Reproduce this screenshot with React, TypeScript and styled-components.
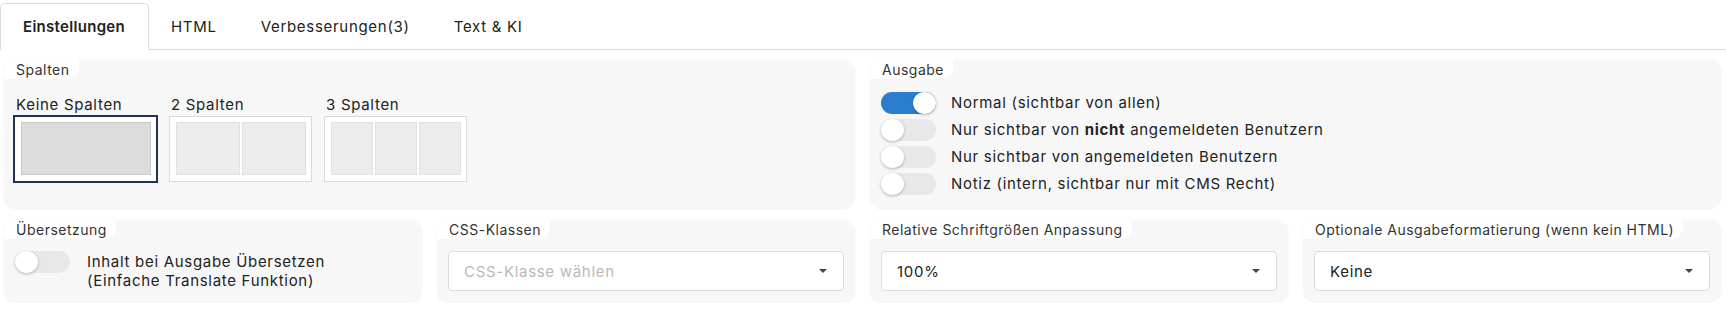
import React from 'react';
import styled, { createGlobalStyle, css } from 'styled-components';

const GlobalStyle = createGlobalStyle`
  * {
    box-sizing: border-box;
  }
  body {
    margin: 0;
    background: #fff;
    color: #222;
    font-family: Inter, 'Open Sans', sans-serif;
    font-size: 15px;
    letter-spacing: 0.7px;
  }
`;

const Page = styled.div`
  width: 1726px;
`;

const TabBar = styled.nav`
  display: flex;
  height: 50px;
  padding-top: 3px;
  border-bottom: 1px solid #d9d9d9;
`;

const Tab = styled.div<{ $active?: boolean }>`
  display: flex;
  align-items: center;
  padding: 0 22px;
  font-size: 15px;
  color: #222;
  cursor: pointer;
  ${(p) =>
    p.$active &&
    css`
      padding-right: 23px;
      font-weight: 600;
      letter-spacing: 0.3px;
      background: #fff;
      border: 1px solid #dcdcdc;
      border-bottom-color: #fff;
      border-radius: 5px 5px 0 0;
      margin-bottom: -1px;
    `}
`;

const Content = styled.div`
  display: flex;
  flex-direction: column;
  gap: 11px;
  padding: 10px 5px 0 4px;
`;

const Row = styled.div<{ $cols: number }>`
  display: grid;
  grid-template-columns: repeat(${(p) => p.$cols}, 1fr);
  gap: 15px;
`;

const Panel = styled.section`
  display: flex;
  flex-direction: column;
  background: #f7f7f7;
  border-radius: 12px;
  box-shadow: 0 0 3px rgba(0, 0, 0, 0.05);
  overflow: hidden;
`;

const PanelLabel = styled.div`
  align-self: flex-start;
  height: 19px;
  line-height: 19px;
  padding: 0 9px 0 12px;
  background: #fff;
  border-bottom-right-radius: 12px;
  font-size: 14px;
  letter-spacing: 0.5px;
  color: #333;
`;

const PanelBody = styled.div<{ $pad: string }>`
  padding: ${(p) => p.$pad};
`;

const OptionList = styled.div`
  display: flex;
  gap: 12px;
`;

const ColumnOption = styled.div`
  display: flex;
  flex-direction: column;
`;

const OptionLabel = styled.div`
  height: 20px;
  line-height: 20px;
  margin-bottom: 1px;
  padding-left: 2px;
  font-size: 15px;
  color: #222;
`;

const ColumnPreview = styled.div<{ $cols: number; $selected?: boolean }>`
  display: grid;
  grid-template-columns: repeat(${(p) => p.$cols}, 1fr);
  gap: 2px;
  width: 143px;
  height: 66px;
  padding: 5px 5px 6px 6px;
  background: #fff;
  border: 1px solid ${(p) => (p.$selected ? '#1d3452' : '#dadada')};
  outline: ${(p) => (p.$selected ? '1px solid #1d3452' : 'none')};
`;

const PreviewCol = styled.div<{ $selected?: boolean }>`
  background: ${(p) => (p.$selected ? '#dcdcdc' : '#ececec')};
  border: 1px solid ${(p) => (p.$selected ? '#c8c8c8' : '#e0e0e0')};
`;

const ToggleList = styled.div`
  display: flex;
  flex-direction: column;
  gap: 5px;
`;

const ToggleRow = styled.label<{ $gap: number }>`
  display: flex;
  align-items: flex-start;
  gap: ${(p) => p.$gap}px;
  font-size: 15px;
  line-height: 22px;
  color: #222;
`;

const Track = styled.span<{ $on?: boolean }>`
  position: relative;
  flex: none;
  width: 55px;
  height: 22px;
  border-radius: 11px;
  background: ${(p) => (p.$on ? '#2b7dd0' : '#e8e8e8')};
`;

const Knob = styled.span<{ $on?: boolean }>`
  position: absolute;
  top: 0;
  left: ${(p) => (p.$on ? '32px' : '0')};
  width: 23px;
  height: 22px;
  border-radius: 50%;
  background: #fff;
  box-shadow: 0 1px 3px rgba(0, 0, 0, 0.28);
`;

const TwoLine = styled.span`
  line-height: 19px;
  padding-top: 1px;
`;

const SelectBox = styled.div<{ $placeholder?: boolean }>`
  display: flex;
  align-items: center;
  justify-content: space-between;
  height: 40px;
  padding: 0 15px 0 15px;
  background: #fff;
  border: 1px solid #dcdcdc;
  border-radius: 4px;
  font-size: 15px;
  color: ${(p) => (p.$placeholder ? '#b9b9b9' : '#222')};
`;

const Caret = styled.span`
  width: 0;
  height: 0;
  border-left: 4px solid transparent;
  border-right: 4px solid transparent;
  border-top: 4px solid #444;
  margin-right: 1px;
`;

const Toggle: React.FC<{ on?: boolean }> = ({ on }) => (
  <Track $on={on}>
    <Knob $on={on} />
  </Track>
);

const columnOptions = [
  { label: 'Keine Spalten', cols: 1, selected: true },
  { label: '2 Spalten', cols: 2 },
  { label: '3 Spalten', cols: 3 },
];

const selects = [
  { label: 'CSS-Klassen', value: 'CSS-Klasse wählen', placeholder: true },
  { label: 'Relative Schriftgrößen Anpassung', value: '100%' },
  { label: 'Optionale Ausgabeformatierung (wenn kein HTML)', value: 'Keine' },
];

export default function App() {
  return (
    <>
      <GlobalStyle />
      <Page>
        <TabBar>
          <Tab $active>Einstellungen</Tab>
          <Tab>HTML</Tab>
          <Tab>Verbesserungen(3)</Tab>
          <Tab>Text &amp; KI</Tab>
        </TabBar>
        <Content>
          <Row $cols={2}>
            <Panel>
              <PanelLabel>Spalten</PanelLabel>
              <PanelBody $pad="16px 10px 25px 10px">
                <OptionList>
                  {columnOptions.map((o) => (
                    <ColumnOption key={o.label}>
                      <OptionLabel>{o.label}</OptionLabel>
                      <ColumnPreview $cols={o.cols} $selected={o.selected}>
                        {Array.from({ length: o.cols }).map((_, i) => (
                          <PreviewCol key={i} $selected={o.selected} />
                        ))}
                      </ColumnPreview>
                    </ColumnOption>
                  ))}
                </OptionList>
              </PanelBody>
            </Panel>
            <Panel>
              <PanelLabel>Ausgabe</PanelLabel>
              <PanelBody $pad="13px 11px 14px 11px">
                <ToggleList>
                  <ToggleRow $gap={15}>
                    <Toggle on />
                    Normal (sichtbar von allen)
                  </ToggleRow>
                  <ToggleRow $gap={15}>
                    <Toggle />
                    <span>
                      Nur sichtbar von <b>nicht</b> angemeldeten Benutzern
                    </span>
                  </ToggleRow>
                  <ToggleRow $gap={15}>
                    <Toggle />
                    Nur sichtbar von angemeldeten Benutzern
                  </ToggleRow>
                  <ToggleRow $gap={15}>
                    <Toggle />
                    Notiz (intern, sichtbar nur mit CMS Recht)
                  </ToggleRow>
                </ToggleList>
              </PanelBody>
            </Panel>
          </Row>
          <Row $cols={4}>
            <Panel>
              <PanelLabel>Übersetzung</PanelLabel>
              <PanelBody $pad="12px 11px 13px 11px">
                <ToggleRow $gap={17}>
                  <Toggle />
                  <TwoLine>
                    Inhalt bei Ausgabe Übersetzen
                    <br />
                    (Einfache Translate Funktion)
                  </TwoLine>
                </ToggleRow>
              </PanelBody>
            </Panel>
            {selects.map((s) => (
              <Panel key={s.label}>
                <PanelLabel>{s.label}</PanelLabel>
                <PanelBody $pad="12px 11px 11px 11px">
                  <SelectBox $placeholder={s.placeholder}>
                    {s.value}
                    <Caret />
                  </SelectBox>
                </PanelBody>
              </Panel>
            ))}
          </Row>
        </Content>
      </Page>
    </>
  );
}
